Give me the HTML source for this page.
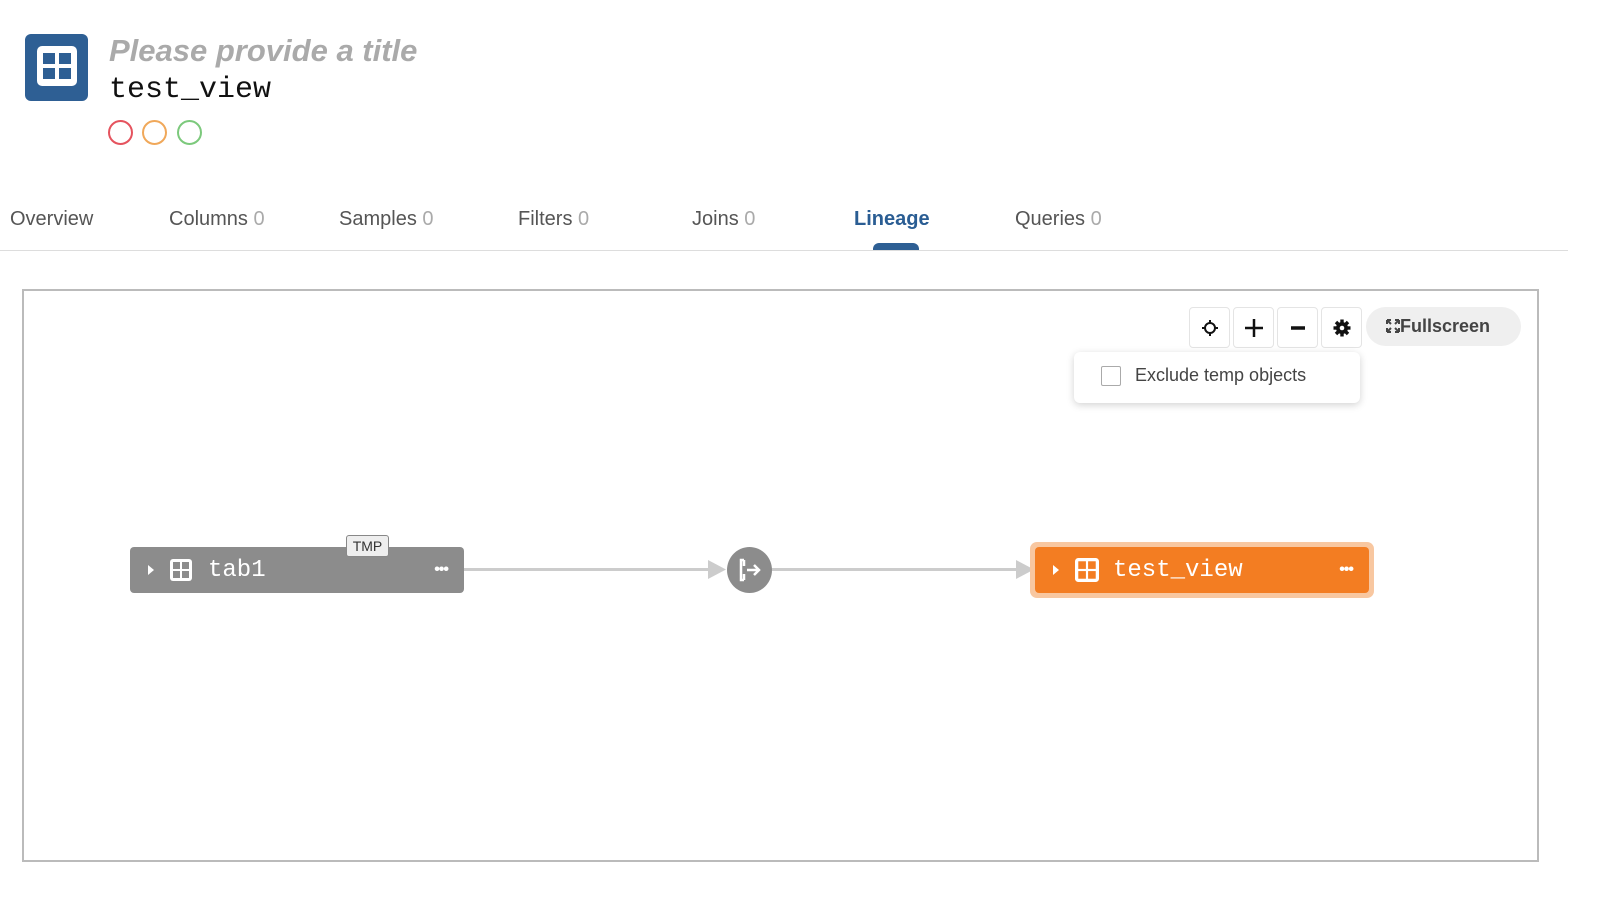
<!DOCTYPE html>
<html><head><meta charset="utf-8"><style>
*{box-sizing:border-box;margin:0;padding:0}
body{width:1600px;height:902px;background:#fff;font-family:"Liberation Sans",sans-serif;position:relative;overflow:hidden}
.abs{position:absolute}
.tab{position:absolute;top:208px;font-size:20px;color:#555}
.tab span{color:#aaa}
.btn{position:absolute;top:307px;width:41px;height:41px;border:1px solid #e4e4e4;border-radius:4px;background:#fff;display:flex;align-items:center;justify-content:center}
.node{position:absolute;height:46px;border-radius:4px;color:#fff;font-family:"Liberation Mono",monospace;font-size:24px;display:flex;align-items:center}
</style></head><body>
<div class="abs" style="left:25px;top:34px;width:63px;height:67px;background:#2e5f94;border-radius:6px"></div>
<svg class="abs" style="left:37px;top:46px" width="40" height="40" viewBox="0 0 40 40"><rect x="0" y="0" width="40" height="40" rx="5" fill="#fff"/><rect x="6" y="7" width="12" height="11" fill="#2e5f94"/><rect x="22" y="7" width="12" height="11" fill="#2e5f94"/><rect x="6" y="22" width="12" height="11" fill="#2e5f94"/><rect x="22" y="22" width="12" height="11" fill="#2e5f94"/></svg>
<div class="abs" style="left:109px;top:33px;font-size:31px;font-style:italic;font-weight:bold;color:#aaa">Please provide a title</div>
<div class="abs" style="left:109px;top:73px;font-size:30px;font-family:'Liberation Mono',monospace;color:#111">test_view</div>
<div class="abs" style="left:108px;top:120px;width:25px;height:25px;border:2px solid #e5535e;border-radius:50%"></div>
<div class="abs" style="left:142px;top:120px;width:25px;height:25px;border:2px solid #f0a85a;border-radius:50%"></div>
<div class="abs" style="left:177px;top:120px;width:25px;height:25px;border:2px solid #7cc97c;border-radius:50%"></div>

<div class="tab" style="left:10px">Overview</div>
<div class="tab" style="left:169px">Columns <span>0</span></div>
<div class="tab" style="left:339px">Samples <span>0</span></div>
<div class="tab" style="left:518px">Filters <span>0</span></div>
<div class="tab" style="left:692px">Joins <span>0</span></div>
<div class="tab" style="left:854px;color:#2a5d93;font-weight:bold">Lineage</div>
<div class="tab" style="left:1015px">Queries <span>0</span></div>
<div class="abs" style="left:873px;top:243px;width:46px;height:8px;background:#2e5f94;border-radius:6px 6px 0 0"></div>
<div class="abs" style="left:0;top:250px;width:1568px;height:1px;background:#ddd"></div>

<div class="abs" style="left:22px;top:289px;width:1517px;height:573px;border:2px solid #bbb"></div>

<div class="btn" style="left:1189px"><svg width="18" height="18" viewBox="0 0 18 18" fill="none" stroke="#111" stroke-width="2"><circle cx="9" cy="9" r="5"/><path d="M9 1v4M9 13v4M1 9h4M13 9h4"/></svg></div>
<div class="btn" style="left:1233px"><svg width="20" height="20" viewBox="0 0 20 20" stroke="#111" stroke-width="2.5"><path d="M10 1v18M1 10h18"/></svg></div>
<div class="btn" style="left:1277px"><svg width="18" height="18" viewBox="0 0 18 18" stroke="#111" stroke-width="3.5"><path d="M2 9h14"/></svg></div>
<div class="btn" style="left:1321px"><svg width="18" height="18" viewBox="0 0 18 18"><g fill="#111"><circle cx="9" cy="9" r="6"/><rect x="7.3" y="0.5" width="3.4" height="17" /><rect x="0.5" y="7.3" width="17" height="3.4"/><rect x="7.3" y="0.5" width="3.4" height="17" transform="rotate(45 9 9)"/><rect x="7.3" y="0.5" width="3.4" height="17" transform="rotate(-45 9 9)"/></g><circle cx="9" cy="9" r="2.3" fill="#fff"/></svg></div>
<div class="abs" style="left:1366px;top:307px;width:155px;height:39px;background:#efefef;border-radius:20px;font-size:18px;font-weight:bold;color:#444;line-height:39px;padding-left:20px">
<svg width="14" height="14" viewBox="0 0 14 14" stroke="#444" stroke-width="2" fill="none" style="vertical-align:-1px"><path d="M1 1l4 4M1 1h4M1 1v4M13 1l-4 4M13 1h-4M13 1v4M1 13l4-4M1 13h4M1 13v-4M13 13l-4-4M13 13h-4M13 13v-4"/></svg>Fullscreen</div>

<div class="abs" style="left:1074px;top:352px;width:286px;height:51px;background:#fff;border-radius:6px;box-shadow:0 2px 8px rgba(0,0,0,.18)"></div>
<div class="abs" style="left:1101px;top:366px;width:20px;height:20px;border:1px solid #aaa;border-radius:2px"></div>
<div class="abs" style="left:1135px;top:365px;font-size:18px;color:#444">Exclude temp objects</div>

<div class="node" style="left:130px;top:547px;width:334px;background:#8c8c8c">
<svg style="margin-left:17px" width="8" height="12" viewBox="0 0 8 12"><path d="M1 1l6 5-6 5z" fill="#fff"/></svg>
<svg style="margin-left:15px" width="22" height="22" viewBox="0 0 22 22"><rect width="22" height="22" rx="3" fill="#fff"/><g fill="#8c8c8c"><rect x="3" y="3" width="7" height="7"/><rect x="12" y="3" width="7" height="7"/><rect x="3" y="12" width="7" height="7"/><rect x="12" y="12" width="7" height="7"/></g></svg>
<span style="margin-left:16px">tab1</span>
<span style="position:absolute;right:16px;font-size:16px;font-family:'Liberation Sans';font-weight:bold;letter-spacing:-1px">•••</span></div>
<div class="abs" style="left:346px;top:535px;width:43px;height:22px;background:#eee;border:1px solid #888;border-radius:3px;font-size:14px;color:#333;text-align:center;line-height:20px">TMP</div>

<div class="abs" style="left:464px;top:568px;width:250px;height:3px;background:#ccc"></div>
<svg class="abs" style="left:708px;top:560px" width="18" height="19"><path d="M0 0l18 9.5L0 19z" fill="#ccc"/></svg>
<div class="abs" style="left:727px;top:547px;width:45px;height:46px;border-radius:50%;background:#8c8c8c"></div>
<svg class="abs" style="left:738px;top:558px" width="26" height="24" viewBox="0 0 26 24" fill="none" stroke="#fff" stroke-width="2.5"><path d="M6 2H3v20h3M6 2v6M6 16v6M9 12h12M16 7l5 5-5 5"/></svg>
<div class="abs" style="left:772px;top:568px;width:250px;height:3px;background:#ccc"></div>
<svg class="abs" style="left:1016px;top:560px" width="18" height="19"><path d="M0 0l18 9.5L0 19z" fill="#ccc"/></svg>

<div class="abs" style="left:1030px;top:542px;width:344px;height:56px;border-radius:7px;background:#f8c7a0"></div>
<div class="node" style="left:1035px;top:547px;width:334px;background:#f37d22">
<svg style="margin-left:17px" width="8" height="12" viewBox="0 0 8 12"><path d="M1 1l6 5-6 5z" fill="#fff"/></svg>
<svg style="margin-left:15px" width="24" height="24" viewBox="0 0 22 22"><rect width="22" height="22" rx="3" fill="#fff"/><g fill="#f37d22"><rect x="3" y="3" width="7" height="7"/><rect x="12" y="3" width="7" height="7"/><rect x="3" y="12" width="7" height="7"/><rect x="12" y="12" width="7" height="7"/></g></svg>
<span style="margin-left:14px">test_view</span>
<span style="position:absolute;right:16px;font-size:16px;font-family:'Liberation Sans';font-weight:bold;letter-spacing:-1px">•••</span></div>
</body></html>
